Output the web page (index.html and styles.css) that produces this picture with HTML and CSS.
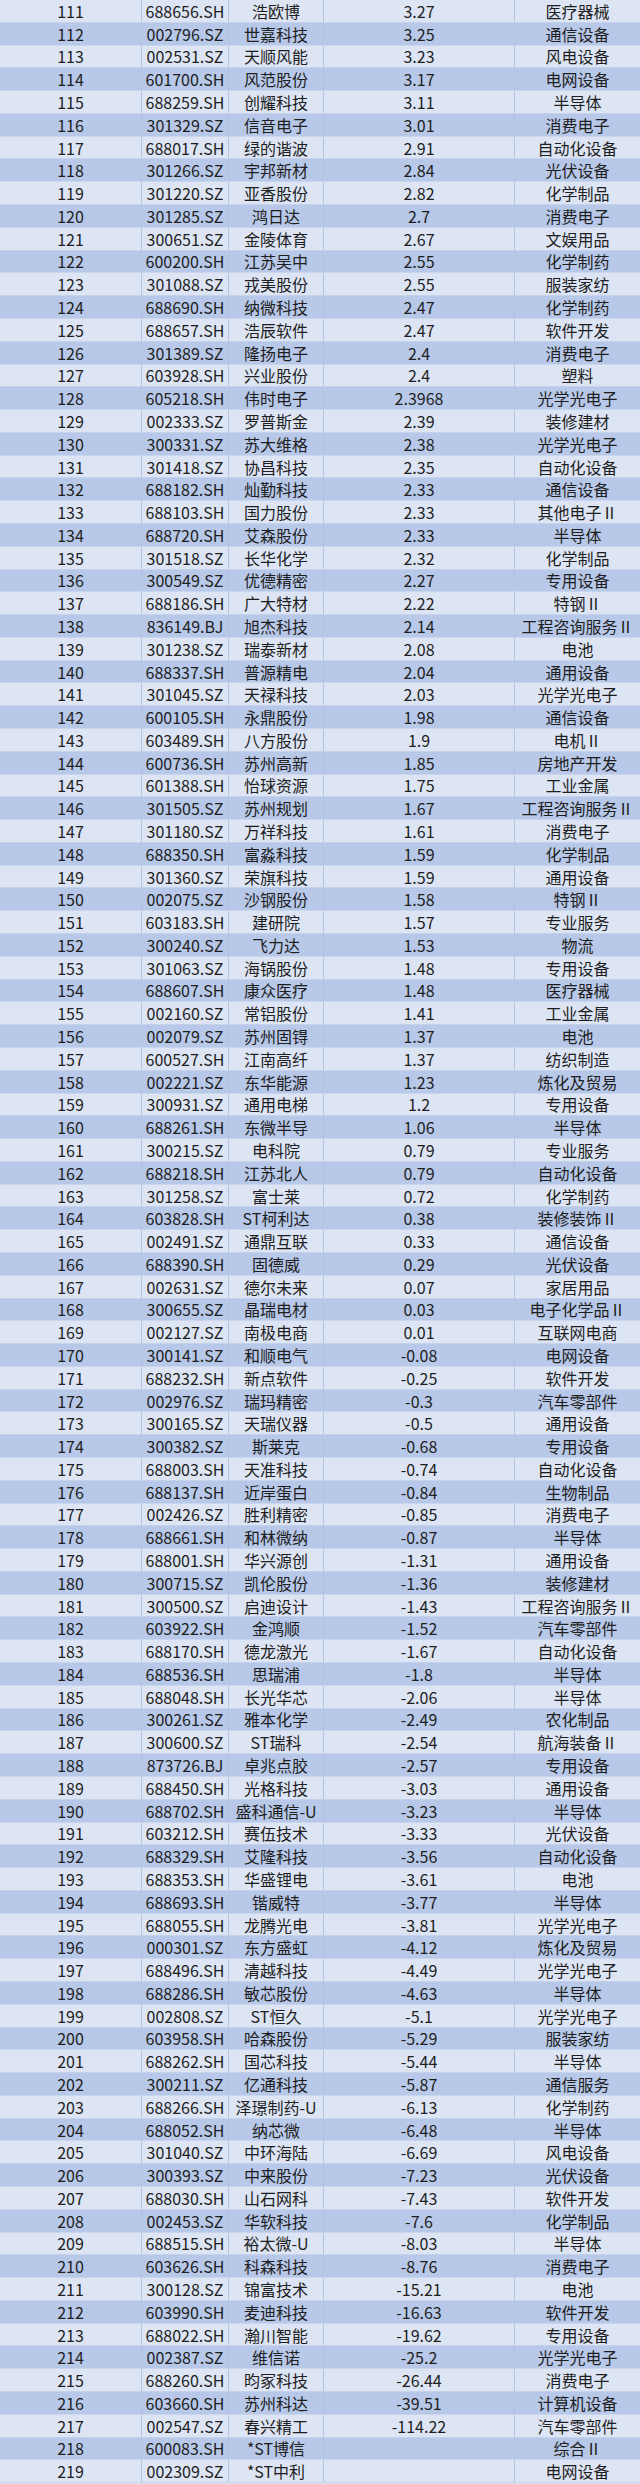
FILE: index.html
```html
<!DOCTYPE html>
<html lang="zh-CN">
<head>
<meta charset="utf-8">
<title>股票列表</title>
<link rel="stylesheet" href="styles.css">
</head>
<body>
<div class="sheet">
<div class="row"><span>111</span><span>688656.SH</span><span>浩欧博</span><span>3.27</span><span>医疗器械</span></div>
<div class="row"><span>112</span><span>002796.SZ</span><span>世嘉科技</span><span>3.25</span><span>通信设备</span></div>
<div class="row"><span>113</span><span>002531.SZ</span><span>天顺风能</span><span>3.23</span><span>风电设备</span></div>
<div class="row"><span>114</span><span>601700.SH</span><span>风范股份</span><span>3.17</span><span>电网设备</span></div>
<div class="row"><span>115</span><span>688259.SH</span><span>创耀科技</span><span>3.11</span><span>半导体</span></div>
<div class="row"><span>116</span><span>301329.SZ</span><span>信音电子</span><span>3.01</span><span>消费电子</span></div>
<div class="row"><span>117</span><span>688017.SH</span><span>绿的谐波</span><span>2.91</span><span>自动化设备</span></div>
<div class="row"><span>118</span><span>301266.SZ</span><span>宇邦新材</span><span>2.84</span><span>光伏设备</span></div>
<div class="row"><span>119</span><span>301220.SZ</span><span>亚香股份</span><span>2.82</span><span>化学制品</span></div>
<div class="row"><span>120</span><span>301285.SZ</span><span>鸿日达</span><span>2.7</span><span>消费电子</span></div>
<div class="row"><span>121</span><span>300651.SZ</span><span>金陵体育</span><span>2.67</span><span>文娱用品</span></div>
<div class="row"><span>122</span><span>600200.SH</span><span>江苏吴中</span><span>2.55</span><span>化学制药</span></div>
<div class="row"><span>123</span><span>301088.SZ</span><span>戎美股份</span><span>2.55</span><span>服装家纺</span></div>
<div class="row"><span>124</span><span>688690.SH</span><span>纳微科技</span><span>2.47</span><span>化学制药</span></div>
<div class="row"><span>125</span><span>688657.SH</span><span>浩辰软件</span><span>2.47</span><span>软件开发</span></div>
<div class="row"><span>126</span><span>301389.SZ</span><span>隆扬电子</span><span>2.4</span><span>消费电子</span></div>
<div class="row"><span>127</span><span>603928.SH</span><span>兴业股份</span><span>2.4</span><span>塑料</span></div>
<div class="row"><span>128</span><span>605218.SH</span><span>伟时电子</span><span>2.3968</span><span>光学光电子</span></div>
<div class="row"><span>129</span><span>002333.SZ</span><span>罗普斯金</span><span>2.39</span><span>装修建材</span></div>
<div class="row"><span>130</span><span>300331.SZ</span><span>苏大维格</span><span>2.38</span><span>光学光电子</span></div>
<div class="row"><span>131</span><span>301418.SZ</span><span>协昌科技</span><span>2.35</span><span>自动化设备</span></div>
<div class="row"><span>132</span><span>688182.SH</span><span>灿勤科技</span><span>2.33</span><span>通信设备</span></div>
<div class="row"><span>133</span><span>688103.SH</span><span>国力股份</span><span>2.33</span><span>其他电子Ⅱ</span></div>
<div class="row"><span>134</span><span>688720.SH</span><span>艾森股份</span><span>2.33</span><span>半导体</span></div>
<div class="row"><span>135</span><span>301518.SZ</span><span>长华化学</span><span>2.32</span><span>化学制品</span></div>
<div class="row"><span>136</span><span>300549.SZ</span><span>优德精密</span><span>2.27</span><span>专用设备</span></div>
<div class="row"><span>137</span><span>688186.SH</span><span>广大特材</span><span>2.22</span><span>特钢Ⅱ</span></div>
<div class="row"><span>138</span><span>836149.BJ</span><span>旭杰科技</span><span>2.14</span><span>工程咨询服务Ⅱ</span></div>
<div class="row"><span>139</span><span>301238.SZ</span><span>瑞泰新材</span><span>2.08</span><span>电池</span></div>
<div class="row"><span>140</span><span>688337.SH</span><span>普源精电</span><span>2.04</span><span>通用设备</span></div>
<div class="row"><span>141</span><span>301045.SZ</span><span>天禄科技</span><span>2.03</span><span>光学光电子</span></div>
<div class="row"><span>142</span><span>600105.SH</span><span>永鼎股份</span><span>1.98</span><span>通信设备</span></div>
<div class="row"><span>143</span><span>603489.SH</span><span>八方股份</span><span>1.9</span><span>电机Ⅱ</span></div>
<div class="row"><span>144</span><span>600736.SH</span><span>苏州高新</span><span>1.85</span><span>房地产开发</span></div>
<div class="row"><span>145</span><span>601388.SH</span><span>怡球资源</span><span>1.75</span><span>工业金属</span></div>
<div class="row"><span>146</span><span>301505.SZ</span><span>苏州规划</span><span>1.67</span><span>工程咨询服务Ⅱ</span></div>
<div class="row"><span>147</span><span>301180.SZ</span><span>万祥科技</span><span>1.61</span><span>消费电子</span></div>
<div class="row"><span>148</span><span>688350.SH</span><span>富淼科技</span><span>1.59</span><span>化学制品</span></div>
<div class="row"><span>149</span><span>301360.SZ</span><span>荣旗科技</span><span>1.59</span><span>通用设备</span></div>
<div class="row"><span>150</span><span>002075.SZ</span><span>沙钢股份</span><span>1.58</span><span>特钢Ⅱ</span></div>
<div class="row"><span>151</span><span>603183.SH</span><span>建研院</span><span>1.57</span><span>专业服务</span></div>
<div class="row"><span>152</span><span>300240.SZ</span><span>飞力达</span><span>1.53</span><span>物流</span></div>
<div class="row"><span>153</span><span>301063.SZ</span><span>海锅股份</span><span>1.48</span><span>专用设备</span></div>
<div class="row"><span>154</span><span>688607.SH</span><span>康众医疗</span><span>1.48</span><span>医疗器械</span></div>
<div class="row"><span>155</span><span>002160.SZ</span><span>常铝股份</span><span>1.41</span><span>工业金属</span></div>
<div class="row"><span>156</span><span>002079.SZ</span><span>苏州固锝</span><span>1.37</span><span>电池</span></div>
<div class="row"><span>157</span><span>600527.SH</span><span>江南高纤</span><span>1.37</span><span>纺织制造</span></div>
<div class="row"><span>158</span><span>002221.SZ</span><span>东华能源</span><span>1.23</span><span>炼化及贸易</span></div>
<div class="row"><span>159</span><span>300931.SZ</span><span>通用电梯</span><span>1.2</span><span>专用设备</span></div>
<div class="row"><span>160</span><span>688261.SH</span><span>东微半导</span><span>1.06</span><span>半导体</span></div>
<div class="row"><span>161</span><span>300215.SZ</span><span>电科院</span><span>0.79</span><span>专业服务</span></div>
<div class="row"><span>162</span><span>688218.SH</span><span>江苏北人</span><span>0.79</span><span>自动化设备</span></div>
<div class="row"><span>163</span><span>301258.SZ</span><span>富士莱</span><span>0.72</span><span>化学制药</span></div>
<div class="row"><span>164</span><span>603828.SH</span><span>ST柯利达</span><span>0.38</span><span>装修装饰Ⅱ</span></div>
<div class="row"><span>165</span><span>002491.SZ</span><span>通鼎互联</span><span>0.33</span><span>通信设备</span></div>
<div class="row"><span>166</span><span>688390.SH</span><span>固德威</span><span>0.29</span><span>光伏设备</span></div>
<div class="row"><span>167</span><span>002631.SZ</span><span>德尔未来</span><span>0.07</span><span>家居用品</span></div>
<div class="row"><span>168</span><span>300655.SZ</span><span>晶瑞电材</span><span>0.03</span><span>电子化学品Ⅱ</span></div>
<div class="row"><span>169</span><span>002127.SZ</span><span>南极电商</span><span>0.01</span><span>互联网电商</span></div>
<div class="row"><span>170</span><span>300141.SZ</span><span>和顺电气</span><span>-0.08</span><span>电网设备</span></div>
<div class="row"><span>171</span><span>688232.SH</span><span>新点软件</span><span>-0.25</span><span>软件开发</span></div>
<div class="row"><span>172</span><span>002976.SZ</span><span>瑞玛精密</span><span>-0.3</span><span>汽车零部件</span></div>
<div class="row"><span>173</span><span>300165.SZ</span><span>天瑞仪器</span><span>-0.5</span><span>通用设备</span></div>
<div class="row"><span>174</span><span>300382.SZ</span><span>斯莱克</span><span>-0.68</span><span>专用设备</span></div>
<div class="row"><span>175</span><span>688003.SH</span><span>天准科技</span><span>-0.74</span><span>自动化设备</span></div>
<div class="row"><span>176</span><span>688137.SH</span><span>近岸蛋白</span><span>-0.84</span><span>生物制品</span></div>
<div class="row"><span>177</span><span>002426.SZ</span><span>胜利精密</span><span>-0.85</span><span>消费电子</span></div>
<div class="row"><span>178</span><span>688661.SH</span><span>和林微纳</span><span>-0.87</span><span>半导体</span></div>
<div class="row"><span>179</span><span>688001.SH</span><span>华兴源创</span><span>-1.31</span><span>通用设备</span></div>
<div class="row"><span>180</span><span>300715.SZ</span><span>凯伦股份</span><span>-1.36</span><span>装修建材</span></div>
<div class="row"><span>181</span><span>300500.SZ</span><span>启迪设计</span><span>-1.43</span><span>工程咨询服务Ⅱ</span></div>
<div class="row"><span>182</span><span>603922.SH</span><span>金鸿顺</span><span>-1.52</span><span>汽车零部件</span></div>
<div class="row"><span>183</span><span>688170.SH</span><span>德龙激光</span><span>-1.67</span><span>自动化设备</span></div>
<div class="row"><span>184</span><span>688536.SH</span><span>思瑞浦</span><span>-1.8</span><span>半导体</span></div>
<div class="row"><span>185</span><span>688048.SH</span><span>长光华芯</span><span>-2.06</span><span>半导体</span></div>
<div class="row"><span>186</span><span>300261.SZ</span><span>雅本化学</span><span>-2.49</span><span>农化制品</span></div>
<div class="row"><span>187</span><span>300600.SZ</span><span>ST瑞科</span><span>-2.54</span><span>航海装备Ⅱ</span></div>
<div class="row"><span>188</span><span>873726.BJ</span><span>卓兆点胶</span><span>-2.57</span><span>专用设备</span></div>
<div class="row"><span>189</span><span>688450.SH</span><span>光格科技</span><span>-3.03</span><span>通用设备</span></div>
<div class="row"><span>190</span><span>688702.SH</span><span>盛科通信-U</span><span>-3.23</span><span>半导体</span></div>
<div class="row"><span>191</span><span>603212.SH</span><span>赛伍技术</span><span>-3.33</span><span>光伏设备</span></div>
<div class="row"><span>192</span><span>688329.SH</span><span>艾隆科技</span><span>-3.56</span><span>自动化设备</span></div>
<div class="row"><span>193</span><span>688353.SH</span><span>华盛锂电</span><span>-3.61</span><span>电池</span></div>
<div class="row"><span>194</span><span>688693.SH</span><span>锴威特</span><span>-3.77</span><span>半导体</span></div>
<div class="row"><span>195</span><span>688055.SH</span><span>龙腾光电</span><span>-3.81</span><span>光学光电子</span></div>
<div class="row"><span>196</span><span>000301.SZ</span><span>东方盛虹</span><span>-4.12</span><span>炼化及贸易</span></div>
<div class="row"><span>197</span><span>688496.SH</span><span>清越科技</span><span>-4.49</span><span>光学光电子</span></div>
<div class="row"><span>198</span><span>688286.SH</span><span>敏芯股份</span><span>-4.63</span><span>半导体</span></div>
<div class="row"><span>199</span><span>002808.SZ</span><span>ST恒久</span><span>-5.1</span><span>光学光电子</span></div>
<div class="row"><span>200</span><span>603958.SH</span><span>哈森股份</span><span>-5.29</span><span>服装家纺</span></div>
<div class="row"><span>201</span><span>688262.SH</span><span>国芯科技</span><span>-5.44</span><span>半导体</span></div>
<div class="row"><span>202</span><span>300211.SZ</span><span>亿通科技</span><span>-5.87</span><span>通信服务</span></div>
<div class="row"><span>203</span><span>688266.SH</span><span>泽璟制药-U</span><span>-6.13</span><span>化学制药</span></div>
<div class="row"><span>204</span><span>688052.SH</span><span>纳芯微</span><span>-6.48</span><span>半导体</span></div>
<div class="row"><span>205</span><span>301040.SZ</span><span>中环海陆</span><span>-6.69</span><span>风电设备</span></div>
<div class="row"><span>206</span><span>300393.SZ</span><span>中来股份</span><span>-7.23</span><span>光伏设备</span></div>
<div class="row"><span>207</span><span>688030.SH</span><span>山石网科</span><span>-7.43</span><span>软件开发</span></div>
<div class="row"><span>208</span><span>002453.SZ</span><span>华软科技</span><span>-7.6</span><span>化学制品</span></div>
<div class="row"><span>209</span><span>688515.SH</span><span>裕太微-U</span><span>-8.03</span><span>半导体</span></div>
<div class="row"><span>210</span><span>603626.SH</span><span>科森科技</span><span>-8.76</span><span>消费电子</span></div>
<div class="row"><span>211</span><span>300128.SZ</span><span>锦富技术</span><span>-15.21</span><span>电池</span></div>
<div class="row"><span>212</span><span>603990.SH</span><span>麦迪科技</span><span>-16.63</span><span>软件开发</span></div>
<div class="row"><span>213</span><span>688022.SH</span><span>瀚川智能</span><span>-19.62</span><span>专用设备</span></div>
<div class="row"><span>214</span><span>002387.SZ</span><span>维信诺</span><span>-25.2</span><span>光学光电子</span></div>
<div class="row"><span>215</span><span>688260.SH</span><span>昀冢科技</span><span>-26.44</span><span>消费电子</span></div>
<div class="row"><span>216</span><span>603660.SH</span><span>苏州科达</span><span>-39.51</span><span>计算机设备</span></div>
<div class="row"><span>217</span><span>002547.SZ</span><span>春兴精工</span><span>-114.22</span><span>汽车零部件</span></div>
<div class="row"><span>218</span><span>600083.SH</span><span>*ST博信</span><span></span><span>综合Ⅱ</span></div>
<div class="row"><span>219</span><span>002309.SZ</span><span>*ST中利</span><span></span><span>电网设备</span></div>
</div>
</body>
</html>
```

FILE: styles.css
```css
html, body {
  margin: 0;
  padding: 0;
  background: #dde5f4;
}

.sheet {
  width: 640px;
  height: 2484px;
  display: flex;
  flex-direction: column;
  font-family: "Noto Sans CJK SC", "Noto Sans", sans-serif;
  font-size: 16px;
  color: #1e1e1e;
}

.row {
  flex: 1 1 0;
  min-height: 0;
  display: grid;
  grid-template-columns: 142px 87px 95px 191px 1fr;
  background: #dde5f4;
  border-bottom: 1px solid #c4d2ec;
  box-sizing: border-box;
}

.row:nth-child(even) {
  background: #b7c8e8;
  border-bottom-color: #c9d6ee;
}

.row > span {
  display: flex;
  align-items: center;
  justify-content: center;
  line-height: 1;
  white-space: nowrap;
  border-right: 1px solid #b3c4e3;
}

.row > span:last-child {
  border-right: none;
}
```
